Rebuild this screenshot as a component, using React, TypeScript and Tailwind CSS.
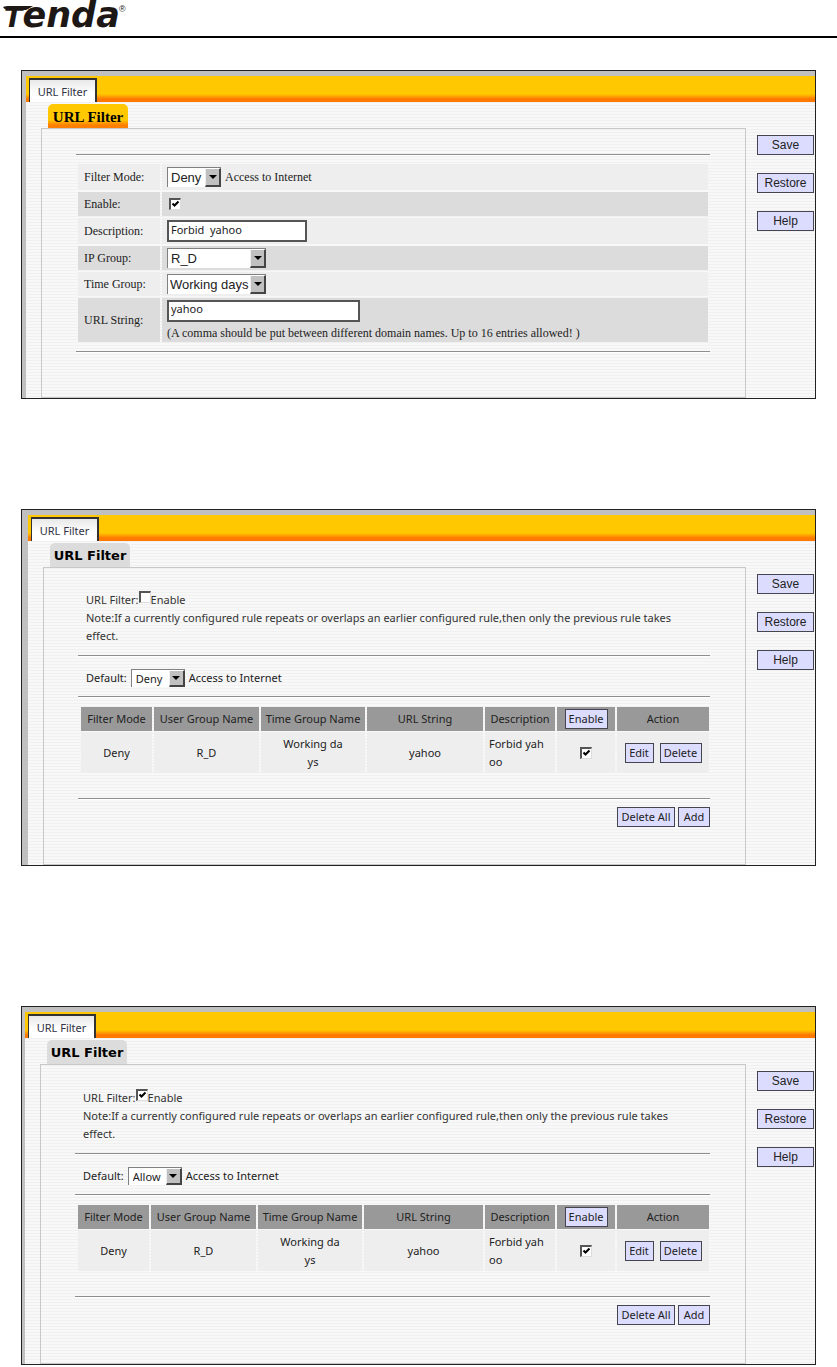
import { useId, useState } from "react";
import type { ReactNode } from "react";
import clsx from "clsx";

interface Rule {
  id: number;
  mode: string;
  userGroup: string;
  timeGroup: string[];
  url: string;
  description: string[];
  enabled: boolean;
}

const rules: Rule[] = [
  {
    id: 1,
    mode: "Deny",
    userGroup: "R_D",
    timeGroup: ["Working da", "ys"],
    url: "yahoo",
    description: ["Forbid yah", "oo"],
    enabled: true,
  },
];

const SANS = "font-['Noto_Sans','Liberation_Sans',sans-serif]";
const SERIF = "font-['Liberation_Serif',serif]";
const ARIAL = "font-['Liberation_Sans',Arial,sans-serif]";

const Logo = () => (
  <svg
    className="block overflow-visible"
    width="130"
    height="36"
    viewBox="0 0 130 36"
    role="img"
    aria-label="Tenda"
  >
    <path d="M3 7 C5 6 7 6 9 6 L33 6 C30 8 28 9 26 10 L9 10 C6 10 4 9 3 7 Z" fill="#1d1715" />
    <text
      x="4"
      y="27"
      fill="#1d1715"
      fontWeight="700"
      fontStyle="italic"
      fontFamily="'DejaVu Sans', sans-serif"
    >
      <tspan fontSize="27">T</tspan>
      <tspan fontSize="35">enda</tspan>
    </text>
    <text
      x="119"
      y="12"
      fill="#1d1715"
      fontSize="9"
      fontFamily="'Liberation Sans', sans-serif"
    >
      ®
    </text>
  </svg>
);

const Rule3D = ({ className }: { className?: string }) => (
  <hr
    className={clsx(
      "h-[2px] border-0 border-t border-b border-t-[#8e8e8e] border-b-white",
      className
    )}
  />
);

const Button = ({
  children,
  className,
}: {
  children: ReactNode;
  className?: string;
}) => (
  <button
    type="button"
    className={clsx(
      "h-5 border border-[#45454f] bg-[#dcdcff] text-center whitespace-nowrap text-[#222]",
      className
    )}
  >
    {children}
  </button>
);

const Checkbox = ({
  checked,
  id,
  label,
}: {
  checked: boolean;
  id?: string;
  label?: string;
}) => (
  <span className="relative inline-block h-3 w-3">
    <input
      id={id}
      type="checkbox"
      aria-label={label}
      defaultChecked={checked}
      className="peer block h-3 w-3 appearance-none border-t-2 border-r border-b border-l-2 border-t-[#555] border-r-[#ddd] border-b-[#ddd] border-l-[#555] bg-white"
    />
    <svg
      className="pointer-events-none absolute top-0 left-0 hidden peer-checked:block"
      width="12"
      height="12"
      viewBox="0 0 12 12"
    >
      <path d="M3.5 5.5 L5.5 7.5 L9.5 3.5" fill="none" stroke="#000" strokeWidth="2" />
    </svg>
  </span>
);

const Select = ({
  id,
  label,
  options,
  initial,
  className,
}: {
  id?: string;
  label?: string;
  options: string[];
  initial: string;
  className?: string;
}) => {
  const [value, setValue] = useState(initial);

  return (
    <span className="relative inline-block align-middle">
      <select
        id={id}
        aria-label={label}
        value={value}
        onChange={(e) => setValue(e.target.value)}
        className={clsx(
          "block appearance-none border-t border-l border-[#808080] bg-white text-[#222]",
          className
        )}
      >
        {options.map((o) => (
          <option key={o}>{o}</option>
        ))}
      </select>
      <span className="pointer-events-none absolute top-px right-0 bottom-0 flex w-4 items-center justify-center border-t border-r-2 border-b-2 border-l border-t-white border-r-[#444] border-b-[#444] border-l-[#eee] bg-[#c0c0c0]">
        <svg width="8" height="4" viewBox="0 0 8 4">
          <path d="M0 0 H8 L4 4 Z" fill="#000" />
        </svg>
      </span>
    </span>
  );
};

const Panel = ({
  stripClass,
  titleClass,
  bodyClass,
  className,
  children,
}: {
  stripClass: string;
  titleClass: string;
  bodyClass: string;
  className?: string;
  children: ReactNode;
}) => (
  <section
    className={clsx(
      "border border-[#222] bg-[#c0c0c0] pt-[5px]",
      stripClass,
      className
    )}
  >
    <div className="bg-[repeating-linear-gradient(to_bottom,#f8f8f8_0px,#f8f8f8_2px,#f0f0f0_2px,#f0f0f0_3px)]">
      <div className="flex h-[26px] items-end bg-[linear-gradient(to_bottom,#ffc800_0px,#ffc800_18px,#ff7800_23px)] pl-[3px]">
        <a
          href="#"
          className={clsx(
            "flex h-6 w-[68px] items-center justify-center border-t-2 border-r-2 border-l border-[#333] bg-linear-to-b from-[#e8e8e8] to-white to-60% pt-[2px] text-[11px] text-[#334]",
            SANS
          )}
        >
          URL Filter
        </a>
      </div>
      <div className="flex pr-px pl-[15px]">
        <div className="min-w-0 flex-1 pt-[2px]">
          <h2
            className={clsx(
              "ml-[7px] flex h-6 w-20 items-center justify-center rounded-t-[5px] pt-[2px] whitespace-nowrap text-black",
              titleClass
            )}
          >
            URL Filter
          </h2>
          <div className={clsx("border border-[#c8c8c8] pr-[35px] pl-[34px]", bodyClass)}>
            {children}
          </div>
        </div>
        <div
          className={clsx(
            "ml-[11px] flex w-[57px] flex-col gap-[18px] pt-[33px] text-[12px] leading-4",
            ARIAL
          )}
        >
          <Button>Save</Button>
          <Button>Restore</Button>
          <Button>Help</Button>
        </div>
      </div>
    </div>
  </section>
);

const FormRow = ({
  label,
  htmlFor,
  dark,
  className,
  children,
}: {
  label: string;
  htmlFor: string;
  dark?: boolean;
  className: string;
  children: ReactNode;
}) => (
  <tr className={clsx(dark ? "bg-[#dcdcdc]" : "bg-[#eeeeee]", className)}>
    <th scope="row" className="w-[82px] py-0 pl-[6px] text-left font-normal">
      <label htmlFor={htmlFor}>{label}</label>
    </th>
    <td className="py-0 pl-[5px]">{children}</td>
  </tr>
);

const inputClass =
  "block h-[22px] border-2 border-[#555] bg-white px-[2px] pb-1 text-[11px] leading-[14px] text-[#222]";

const EditRule = () => {
  const id = useId();

  return (
    <Panel
      stripClass="pl-1"
      titleClass={clsx(
        "bg-[linear-gradient(to_bottom,#ffc800_0px,#ffc800_16px,#ff8000_21px)] text-[15px] font-bold",
        SERIF
      )}
      bodyClass="pt-[25px] pb-11"
      className="mt-8"
    >
      <Rule3D />
      <table
        className={clsx(
          "mt-[6px] w-full border-separate border-spacing-[2px] text-[12px] leading-4 text-[#222]",
          SERIF
        )}
      >
        <tbody>
          <FormRow label="Filter Mode:" htmlFor={`${id}-mode`} className="h-[26px]">
            <span className="flex items-center gap-1">
              <Select
                id={`${id}-mode`}
                options={["Deny", "Allow"]}
                initial="Deny"
                className={clsx("h-5 w-[54px] pl-[3px] text-[13px]", ARIAL)}
              />
              <span>Access to Internet</span>
            </span>
          </FormRow>
          <FormRow label="Enable:" htmlFor={`${id}-enable`} dark className="h-6">
            <span className="ml-[2px] flex">
              <Checkbox id={`${id}-enable`} checked />
            </span>
          </FormRow>
          <FormRow label="Description:" htmlFor={`${id}-desc`} className="h-[26px]">
            <input
              id={`${id}-desc`}
              defaultValue="Forbid  yahoo"
              className={clsx("w-[140px]", inputClass, SANS)}
            />
          </FormRow>
          <FormRow label="IP Group:" htmlFor={`${id}-ip`} dark className="h-6">
            <Select
              id={`${id}-ip`}
              options={["R_D"]}
              initial="R_D"
              className={clsx("h-5 w-[99px] pl-[3px] text-[13px]", ARIAL)}
            />
          </FormRow>
          <FormRow label="Time Group:" htmlFor={`${id}-time`} className="h-6">
            <Select
              id={`${id}-time`}
              options={["Working days"]}
              initial="Working days"
              className={clsx("h-5 w-[99px] pl-[2px] text-[13px]", ARIAL)}
            />
          </FormRow>
          <FormRow label="URL String:" htmlFor={`${id}-url`} dark className="h-11">
            <input
              id={`${id}-url`}
              defaultValue="yahoo"
              className={clsx("w-[193px]", inputClass, SANS)}
            />
            <p className="mt-[3px]">
              (A comma should be put between different domain names. Up to 16
              entries allowed! )
            </p>
          </FormRow>
        </tbody>
      </table>
      <Rule3D className="mt-[7px]" />
    </Panel>
  );
};

const RuleList = ({
  enabled,
  defaultMode,
  stripClass,
  bodyClass,
  className,
}: {
  enabled: boolean;
  defaultMode: string;
  stripClass: string;
  bodyClass: string;
  className: string;
}) => {
  const id = useId();

  return (
    <Panel
      stripClass={stripClass}
      titleClass="bg-[#dcdcdc] text-[13px] font-bold font-['DejaVu_Sans',sans-serif]"
      bodyClass={bodyClass}
      className={className}
    >
      <div className={clsx("text-[11px] leading-[18px] text-[#333]", SANS)}>
        <div className="pr-6 pl-2">
          <div className="flex">
            <span>URL Filter:</span>
            <Checkbox id={`${id}-on`} checked={enabled} />
            <label htmlFor={`${id}-on`}>Enable</label>
          </div>
          <p>
            Note:If a currently configured rule repeats or overlaps an earlier
            configured rule,then only the previous rule takes effect.
          </p>
        </div>
        <Rule3D className="mt-[10px]" />
        <div className="mt-[11px] flex h-5 items-center gap-1 pl-2 text-[#222]">
          <label htmlFor={`${id}-default`}>Default:</label>
          <Select
            id={`${id}-default`}
            options={["Deny", "Allow"]}
            initial={defaultMode}
            className="h-[18px] w-[54px] pl-1"
          />
          <span>Access to Internet</span>
        </div>
        <Rule3D className="mt-2" />
        <table className="mt-2 ml-px w-full table-fixed border-separate border-spacing-x-[2px] border-spacing-y-px text-center text-[#222]">
          <colgroup>
            <col className="w-[71px]" />
            <col className="w-[105px]" />
            <col className="w-[104px]" />
            <col />
            <col className="w-[70px]" />
            <col className="w-[58px]" />
            <col className="w-[92px]" />
          </colgroup>
          <thead>
            <tr className="h-6 bg-[#999999] whitespace-nowrap">
              <th className="p-0 font-normal">Filter Mode</th>
              <th className="p-0 font-normal">User Group Name</th>
              <th className="p-0 font-normal">Time Group Name</th>
              <th className="p-0 font-normal">URL String</th>
              <th className="p-0 font-normal">Description</th>
              <th className="p-0 font-normal">
                <Button className="w-[43px]">Enable</Button>
              </th>
              <th className="p-0 font-normal">Action</th>
            </tr>
          </thead>
          <tbody>
            {rules.map((rule) => (
              <tr key={rule.id} className="h-[41px] bg-[#eeeeee]">
                <td className="p-0">{rule.mode}</td>
                <td className="p-0">{rule.userGroup}</td>
                <td className="p-0">
                  {rule.timeGroup.map((line) => (
                    <div key={line}>{line}</div>
                  ))}
                </td>
                <td className="p-0">{rule.url}</td>
                <td className="p-0 pl-1 text-left">
                  {rule.description.map((line) => (
                    <div key={line}>{line}</div>
                  ))}
                </td>
                <td className="p-0">
                  <span className="flex justify-center">
                    <Checkbox checked={rule.enabled} label="Enable rule" />
                  </span>
                </td>
                <td className="p-0">
                  <span className="flex justify-center gap-[6px]">
                    <Button className="w-[29px]">Edit</Button>
                    <Button className="w-[42px]">Delete</Button>
                  </span>
                </td>
              </tr>
            ))}
          </tbody>
        </table>
        <Rule3D className="mt-6" />
        <div className="mt-[7px] flex justify-end gap-[3px]">
          <Button className="w-[58px]">Delete All</Button>
          <Button className="w-8">Add</Button>
        </div>
      </div>
    </Panel>
  );
};

export default function App() {
  return (
    <div className="bg-white">
      <header className="border-b-2 border-black">
        <Logo />
      </header>
      <main className="mx-[21px]">
        <EditRule />
        <RuleList
          enabled={false}
          defaultMode="Deny"
          stripClass="pl-[6px]"
          bodyClass="pt-[23px] pb-[37px]"
          className="mt-[110px]"
        />
        <RuleList
          enabled
          defaultMode="Allow"
          stripClass="pl-[3px]"
          bodyClass="pt-6 pb-[38px]"
          className="mt-[140px]"
        />
      </main>
    </div>
  );
}
